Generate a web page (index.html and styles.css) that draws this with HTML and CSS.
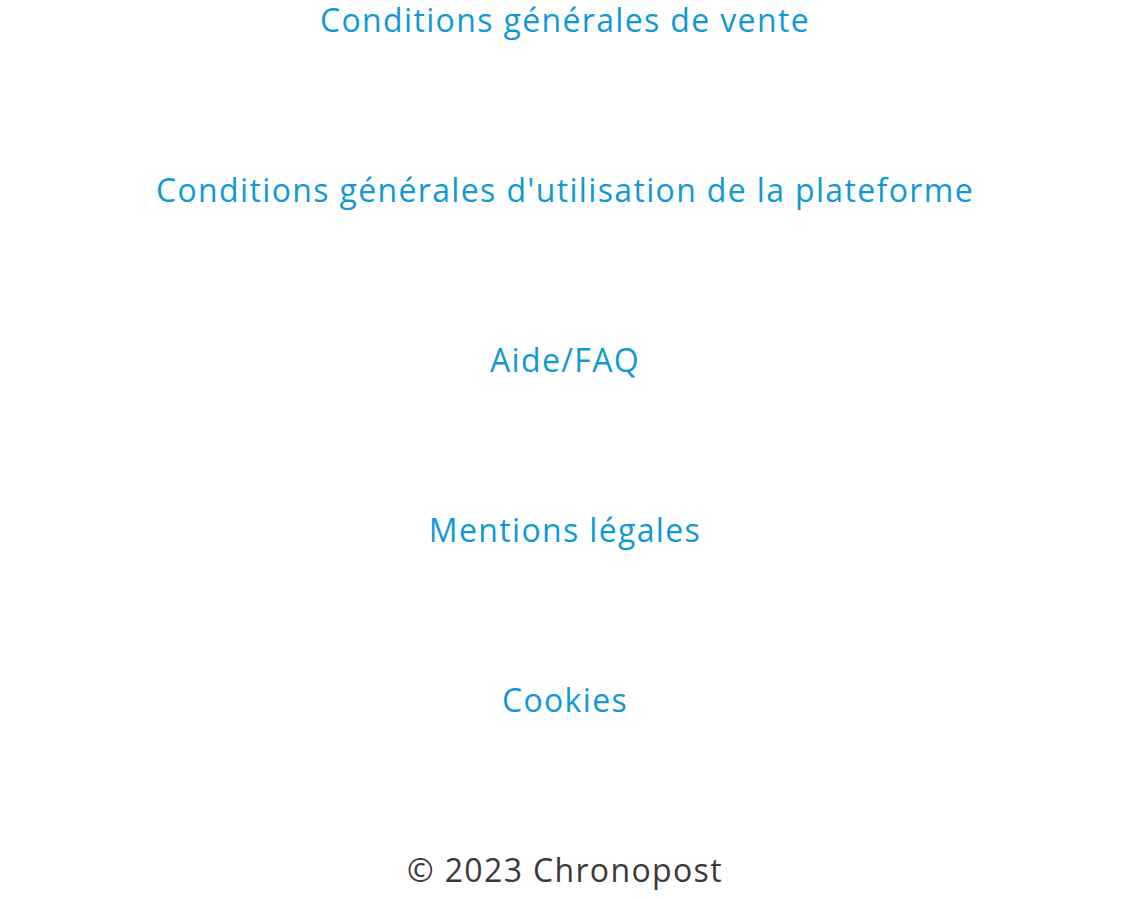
FILE: index.html
```html
<!DOCTYPE html>
<html lang="fr">
<head>
<meta charset="utf-8">
<title>Chronopost</title>
<link rel="stylesheet" href="styles.css">
</head>
<body>
<nav class="footer-links">
  <a class="link" href="#">Conditions générales de vente</a>
  <a class="link" href="#">Conditions générales d'utilisation de la plateforme</a>
  <a class="link" href="#">Aide/FAQ</a>
  <a class="link" href="#">Mentions légales</a>
  <a class="link" href="#">Cookies</a>
  <p class="copyright">© 2023 Chronopost</p>
</nav>
</body>
</html>
```

FILE: styles.css
```css
html, body {
  margin: 0;
  padding: 0;
  background: #ffffff;
}
.footer-links {
  display: flex;
  flex-direction: column;
  align-items: center;
  gap: 130px;
  font-family: "Open Sans", sans-serif;
  font-size: 32px;
  font-weight: 400;
  letter-spacing: 1.35px;
}
.link {
  display: block;
  line-height: 40px;
  color: #1199d6;
  text-decoration: none;
}
.copyright {
  margin: 0;
  line-height: 40px;
  color: #3a3a3a;
}
```
